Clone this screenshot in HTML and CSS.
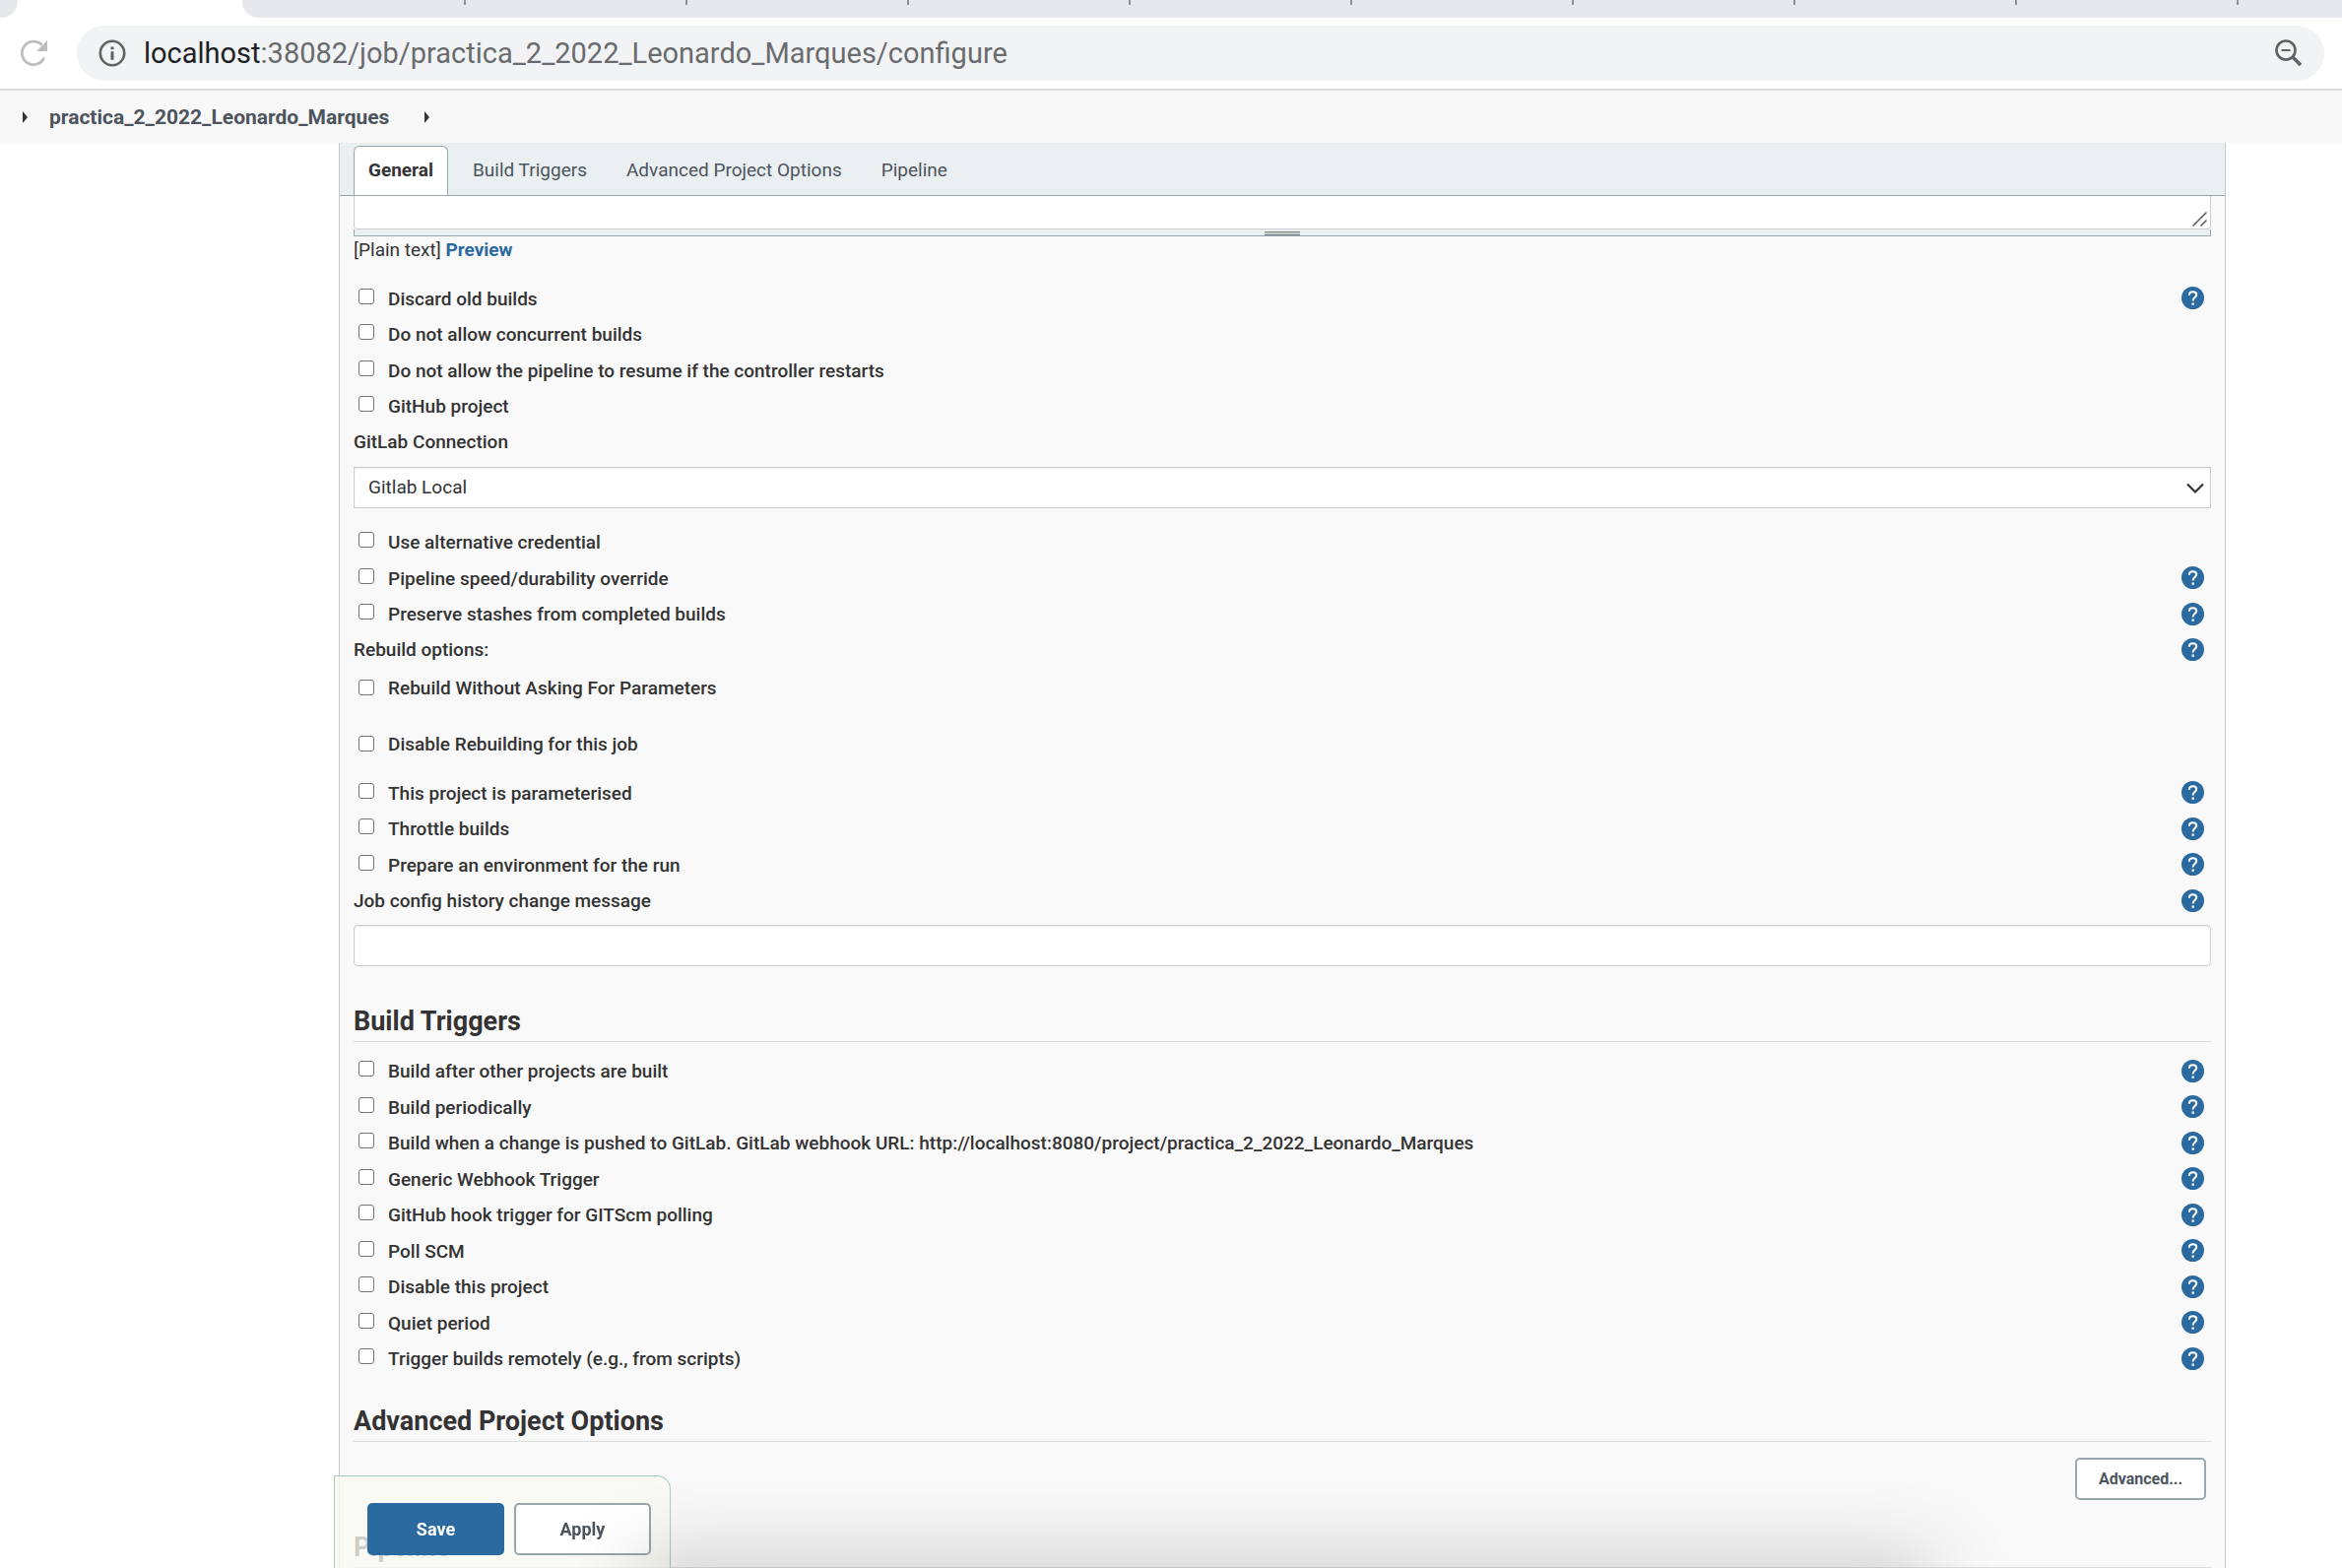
FILE: index.html
```
<!DOCTYPE html>
<html lang="en">
<head>
<meta charset="utf-8">
<title>practica_2_2022_Leonardo_Marques Config [Jenkins]</title>
<link rel="stylesheet" href="styles.css">
</head>
<body>
<svg class="sprite" aria-hidden="true">
  <symbol id="help" viewBox="0 0 24 24">
    <circle cx="12" cy="12" r="12" fill="#2b6aa0"/>
    <path d="M8.200 9c0-2.200 1.600-3.600 3.900-3.600 2.200 0 3.800 1.300 3.800 3.300 0 2.700-3.800 3-3.800 6.300" fill="none" stroke="#fff" stroke-width="2.100"/>
    <rect x="11" y="17.200" width="2.400" height="2.400" fill="#fff"/>
  </symbol>
</svg>

<header class="browser">
  <div class="tabstrip">
    <div class="tabstrip-edge"></div>
    <div class="tabstrip-active"></div>
    <div class="tabstrip-rest"></div>
  </div>
  <div class="toolbar">
    <button class="icon-button" type="button" aria-label="Reload">
      <svg width="30" height="30" viewBox="0 0 30 30"><path d="M24.800 19.500A11.700 11.700 0 1 1 22.500 6.800" fill="none" stroke="#bcbdc0" stroke-width="2.800"/><path d="M28 2v11H17z" fill="#bcbdc0"/></svg>
    </button>
    <div class="omnibox">
      <svg width="28" height="28" viewBox="0 0 28 28"><circle cx="14" cy="14" r="12.200" fill="none" stroke="#5f6368" stroke-width="2.600"/><path d="M14 12.200v8.500M14 7.500v2.800" stroke="#5f6368" stroke-width="3"/></svg>
      <div class="url"><b>localhost</b>:38082/job/practica_2_2022_Leonardo_Marques/configure</div>
      <svg width="28" height="28" viewBox="0 0 28 28"><circle cx="11" cy="11" r="9.500" fill="none" stroke="#5f6368" stroke-width="2.600"/><path d="M6.500 11h9" stroke="#5f6368" stroke-width="2"/><path d="M18 18l8 8" stroke="#5f6368" stroke-width="3.600"/></svg>
    </div>
  </div>
</header>

<nav class="breadcrumbs" aria-label="Breadcrumb">
  <span class="arrow"></span>
  <a href="#job">practica_2_2022_Leonardo_Marques</a>
  <span class="arrow"></span>
</nav>

<main class="panel">
  <nav class="tabs">
    <a class="tab tab-active" href="#general">General</a>
    <a class="tab" href="#triggers">Build Triggers</a>
    <a class="tab" href="#advanced">Advanced Project Options</a>
    <a class="tab" href="#pipeline">Pipeline</a>
  </nav>

  <form class="form">
    <div class="description-wrap">
      <textarea class="description" aria-label="Description"></textarea>
      <svg class="resizer" width="15" height="15" viewBox="0 0 15 15"><path d="M.5 14.500l14-14M8.500 14.500l6-6" stroke="#555" stroke-width="1.500"/></svg>
    </div>
    <div class="resize-bar"><span class="grip"></span></div>
    <p class="markup">[Plain text] <a href="#preview">Preview</a></p>

    <div class="options">
      <div class="option"><label><input type="checkbox">Discard old builds</label><a href="#help" aria-label="Help"><svg class="help"><use href="#help"/></svg></a></div>
      <div class="option"><label><input type="checkbox">Do not allow concurrent builds</label></div>
      <div class="option"><label><input type="checkbox">Do not allow the pipeline to resume if the controller restarts</label></div>
      <div class="option"><label><input type="checkbox">GitHub project</label></div>
    </div>

    <div class="caption"><label for="connection">GitLab Connection</label></div>
    <div class="select-wrap">
      <select id="connection" class="field select"><option>Gitlab Local</option></select>
      <svg class="chevron" width="18" height="12" viewBox="0 0 18 12"><path d="M1 1.500l8 8 8-8" fill="none" stroke="#333" stroke-width="2.200"/></svg>
    </div>

    <div class="options options-alt">
      <div class="option"><label><input type="checkbox">Use alternative credential</label></div>
      <div class="option"><label><input type="checkbox">Pipeline speed/durability override</label><a href="#help" aria-label="Help"><svg class="help"><use href="#help"/></svg></a></div>
      <div class="option"><label><input type="checkbox">Preserve stashes from completed builds</label><a href="#help" aria-label="Help"><svg class="help"><use href="#help"/></svg></a></div>
    </div>

    <div class="caption">Rebuild options:<a href="#help" aria-label="Help"><svg class="help"><use href="#help"/></svg></a></div>
    <div class="rebuild">
      <label><input type="checkbox">Rebuild Without Asking For Parameters</label>
      <label><input type="checkbox">Disable Rebuilding for this job</label>
    </div>

    <div class="options">
      <div class="option"><label><input type="checkbox">This project is parameterised</label><a href="#help" aria-label="Help"><svg class="help"><use href="#help"/></svg></a></div>
      <div class="option"><label><input type="checkbox">Throttle builds</label><a href="#help" aria-label="Help"><svg class="help"><use href="#help"/></svg></a></div>
      <div class="option"><label><input type="checkbox">Prepare an environment for the run</label><a href="#help" aria-label="Help"><svg class="help"><use href="#help"/></svg></a></div>
    </div>

    <div class="caption"><label for="message">Job config history change message</label><a href="#help" aria-label="Help"><svg class="help"><use href="#help"/></svg></a></div>
    <input id="message" class="field message" type="text">

    <h2 class="section-title title-triggers" id="triggers">Build Triggers</h2>
    <div class="options options-alt">
      <div class="option"><label><input type="checkbox">Build after other projects are built</label><a href="#help" aria-label="Help"><svg class="help"><use href="#help"/></svg></a></div>
      <div class="option"><label><input type="checkbox">Build periodically</label><a href="#help" aria-label="Help"><svg class="help"><use href="#help"/></svg></a></div>
      <div class="option"><label><input type="checkbox">Build when a change is pushed to GitLab. GitLab webhook URL: http://localhost:8080/project/practica_2_2022_Leonardo_Marques</label><a href="#help" aria-label="Help"><svg class="help"><use href="#help"/></svg></a></div>
      <div class="option"><label><input type="checkbox">Generic Webhook Trigger</label><a href="#help" aria-label="Help"><svg class="help"><use href="#help"/></svg></a></div>
      <div class="option"><label><input type="checkbox">GitHub hook trigger for GITScm polling</label><a href="#help" aria-label="Help"><svg class="help"><use href="#help"/></svg></a></div>
      <div class="option"><label><input type="checkbox">Poll SCM</label><a href="#help" aria-label="Help"><svg class="help"><use href="#help"/></svg></a></div>
      <div class="option"><label><input type="checkbox">Disable this project</label><a href="#help" aria-label="Help"><svg class="help"><use href="#help"/></svg></a></div>
      <div class="option"><label><input type="checkbox">Quiet period</label><a href="#help" aria-label="Help"><svg class="help"><use href="#help"/></svg></a></div>
      <div class="option"><label><input type="checkbox">Trigger builds remotely (e.g., from scripts)</label><a href="#help" aria-label="Help"><svg class="help"><use href="#help"/></svg></a></div>
    </div>

    <h2 class="section-title title-advanced" id="advanced">Advanced Project Options</h2>
    <div class="advanced-row"><button class="button button-small" type="button">Advanced...</button></div>

    <h2 class="section-title" id="pipeline">Pipeline</h2>
  </form>
</main>

<div class="save-bar">
  <button class="button button-primary" type="submit">Save</button>
  <button class="button" type="button">Apply</button>
</div>
<div class="bottom-shadow"></div>
</body>
</html>
```
FILE: styles.css
```
* {
  box-sizing: border-box;
}

html {
  height: 100%;
  overflow: hidden;
}

body {
  margin: 0;
  height: 100%;
  overflow: hidden;
  display: flex;
  flex-direction: column;
  background: #fff;
  color: #333;
  font-family: Roboto, "Liberation Sans", sans-serif;
  font-size: 19px;
  line-height: 24px;
}

.sprite {
  position: absolute;
  width: 0;
  height: 0;
}

/* Browser chrome */
.browser {
  flex: none;
  border-bottom: 2px solid #d9dadb;
}

.tabstrip {
  display: flex;
  height: 18px;
}

.tabstrip-edge {
  width: 18px;
  background: #e7e8ec;
  border-bottom-right-radius: 16px;
}

.tabstrip-active {
  width: 228px;
}

.tabstrip-rest {
  flex: 1;
  border-bottom-left-radius: 16px;
  background: repeating-linear-gradient(to right, transparent 0 223px, #8e9196 223px 225px) 2px 0 / 100% 5px no-repeat #e7e8ec;
}

.toolbar {
  display: flex;
  align-items: center;
  gap: 28px;
  padding: 8px 18px 8px 20px;
}

.icon-button {
  display: flex;
  padding: 0;
  border: 0;
  background: none;
}

.omnibox {
  flex: 1;
  display: flex;
  align-items: center;
  gap: 18px;
  height: 56px;
  padding: 0 22px;
  border-radius: 28px;
  background: #f1f3f4;
}

.url {
  flex: 1;
  font-size: 29px;
  line-height: 36px;
  color: #6a6b6e;
}

.url b {
  font-weight: 400;
  color: #202124;
}

/* Breadcrumbs */
.breadcrumbs {
  flex: none;
  display: flex;
  align-items: center;
  height: 53px;
  padding: 0 23px;
  background: #f8f8f8;
}

.breadcrumbs a {
  margin: 0 36px 0 22px;
  font-size: 21px;
  font-weight: 700;
  color: #4d545d;
  text-decoration: none;
}

.arrow {
  border-left: 5px solid #333;
  border-top: 6px solid transparent;
  border-bottom: 6px solid transparent;
}

/* Configuration panel */
.panel {
  flex: 1;
  min-height: 0;
  overflow: hidden;
  margin: 0 118px 0 344px;
  border: solid #c6c9cb;
  border-width: 0 1px;
  background: #f9f9f9;
}

.tabs {
  display: flex;
  gap: 10px;
  height: 54px;
  padding: 3px 14px 0;
  border-bottom: 1px solid #98a6ad;
  background: #eaeff2;
}

.tab {
  padding: 12px 14px;
  border: 1px solid transparent;
  color: #4d545d;
  text-decoration: none;
}

.tab-active {
  border-color: #98a6ad;
  border-bottom: 0;
  border-radius: 6px 6px 0 0;
  background: #fff;
  color: #333;
  font-weight: 700;
}

.form {
  padding: 0 14px;
}

.description-wrap {
  position: relative;
}

.description {
  display: block;
  width: 100%;
  height: 34px;
  border: 1px solid #ccc;
  border-top: 0;
  border-radius: 0 0 4px 4px;
  background: #fff;
  resize: none;
}

.resizer {
  position: absolute;
  right: 4px;
  bottom: 3px;
}

.resize-bar {
  display: flex;
  justify-content: center;
  align-items: flex-end;
  height: 7px;
  border: 1px solid #98a6ad;
  border-top: 0;
  background: #eaeff2;
}

.grip {
  width: 36px;
  height: 4px;
  border: solid #7f8a87;
  border-width: 1px 0;
  background: #c5cbc8;
}

.markup {
  margin: 2px 0 19px;
}

.markup a {
  color: #2b6aa0;
  font-weight: 700;
  text-decoration: none;
}

.options {
  display: grid;
  grid-auto-rows: 37px 36px;
}

.options-alt {
  grid-auto-rows: 36px 37px;
}

.option,
.caption {
  display: flex;
  justify-content: space-between;
  align-items: center;
  padding-right: 7px;
  font-weight: 500;
}

.option a {
  margin-bottom: 2px;
}

.option label,
.rebuild label {
  display: flex;
  align-items: center;
  gap: 14px;
  padding-left: 5px;
  font-weight: 500;
}

input[type="checkbox"] {
  appearance: none;
  width: 16px;
  height: 16px;
  margin: 0 0 6px;
  border: 1px solid #767676;
  border-radius: 3px;
  background: #fff;
}

.help {
  display: block;
  width: 23px;
  height: 23px;
}

.caption {
  height: 35px;
}

.field {
  display: block;
  width: 100%;
  height: 42px;
  padding: 0 14px;
  border: 1px solid #ccc;
  border-radius: 4px;
  background: #fff;
  box-shadow: inset 0 1px 2px rgba(0, 0, 0, 0.08);
  color: #333;
  font: inherit;
}

.select-wrap {
  position: relative;
  margin: 8px 0 17px;
}

.select {
  appearance: none;
  border-radius: 0;
}

.chevron {
  position: absolute;
  right: 7px;
  top: 16px;
}

.rebuild {
  display: grid;
  gap: 33px;
  padding: 10px 0 19px;
}

.rebuild input[type="checkbox"] {
  margin-bottom: 2px;
}

.message {
  margin-top: 7px;
}

.section-title {
  margin: 0;
  padding-bottom: 4px;
  border-bottom: 1px solid #ddd;
  font-size: 27px;
  line-height: 32px;
  font-weight: 700;
}

.title-triggers {
  margin: 40px 0 12px;
}

.title-advanced {
  margin-top: 29px;
}

.advanced-row {
  display: flex;
  justify-content: flex-end;
  padding: 16px 5px 32px;
}

.button {
  width: 139px;
  height: 53px;
  border: 2px solid #98a6ad;
  border-radius: 5px;
  background: #fff;
  color: #4d545d;
  font: 700 18px/24px Roboto, "Liberation Sans", sans-serif;
}

.button-primary {
  border-color: #2b6aa0;
  background: #2b6aa0;
  color: #fff;
}

.button-small {
  width: 133px;
  height: 43px;
  font-size: 16px;
}

/* Save bar pinned over the end of the form */
.save-bar {
  position: fixed;
  left: 339px;
  bottom: 0;
  display: flex;
  gap: 10px;
  padding: 27px 19px 13px 33px;
  border: 1px solid #a9cdb9;
  border-bottom: 0;
  border-top-right-radius: 14px;
  background: rgba(248, 250, 241, 0.78);
}

.bottom-shadow {
  position: fixed;
  left: 650px;
  right: 420px;
  bottom: -40px;
  height: 40px;
  box-shadow: 0 0 80px 4px rgba(0, 0, 0, 0.25);
  pointer-events: none;
}
```
